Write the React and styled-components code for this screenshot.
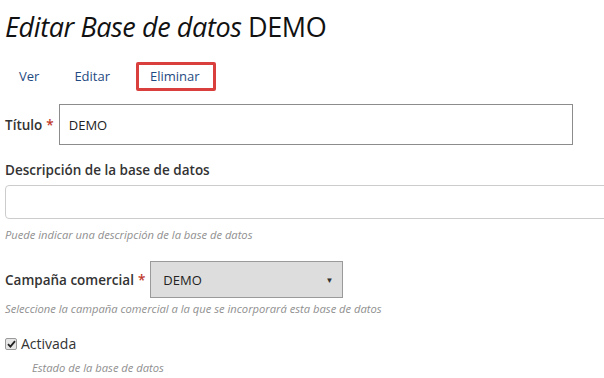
import React from "react";
import styled, { createGlobalStyle } from "styled-components";

const GlobalStyle = createGlobalStyle`
  body {
    margin: 0;
    background: #ffffff;
    font-family: "Open Sans", "Noto Sans", sans-serif;
    color: #333333;
    overflow: hidden;
  }
`;

const Page = styled.div`
  width: 604px;
  height: 378px;
  padding: 0 0 0 5px;
  box-sizing: border-box;
  overflow: hidden;
`;

const Title = styled.h1`
  margin: 0;
  padding-top: 11px;
  font-size: 27px;
  font-weight: 400;
  line-height: 32px;
  color: #111111;
  letter-spacing: -0.4px;
  em {
    font-style: italic;
  }
`;

const Tabs = styled.nav`
  display: flex;
  align-items: center;
  margin-top: 19px;
`;

const Tab = styled.a`
  display: block;
  box-sizing: border-box;
  height: 29px;
  line-height: 23px;
  padding: ${(p) => (p.active ? "0 13px 0 11px" : "0 11px")};
  font-size: 13px;
  color: #1f4a82;
  text-decoration: none;
  border: 3px solid ${(p) => (p.active ? "#d9403d" : "transparent")};
  border-radius: 2px;
  margin-left: ${(p) => p.offset || 0}px;
`;

const Row = styled.div`
  display: flex;
  align-items: center;
  margin-top: ${(p) => p.top || 0}px;
`;

const Label = styled.label`
  font-size: 13.5px;
  font-weight: 600;
  color: #333333;
  margin-right: 5px;
  white-space: nowrap;
`;

const Star = styled.span`
  color: #c0392b;
  margin-left: 4px;
`;

const TextInput = styled.div`
  box-sizing: border-box;
  width: ${(p) => p.width};
  height: ${(p) => p.height}px;
  border: 1px solid ${(p) => p.border};
  border-radius: ${(p) => p.radius || 0}px;
  background: #ffffff;
  font-size: 13px;
  color: #222222;
  display: flex;
  align-items: center;
  padding-left: 9px;
`;

const Block = styled.div`
  margin-top: ${(p) => p.top || 0}px;
`;

const BlockLabel = styled.div`
  font-size: 13.5px;
  font-weight: 600;
  color: #333333;
  margin-bottom: 6px;
`;

const Help = styled.div`
  font-size: 11.2px;
  font-style: italic;
  color: #8f8f8f;
  margin-top: ${(p) => p.top || 0}px;
  padding-left: ${(p) => p.indent || 0}px;
`;

const Select = styled.div`
  box-sizing: border-box;
  width: 193px;
  height: 37px;
  border: 1px solid #9a9a9a;
  background: #dddddd;
  display: flex;
  align-items: center;
  justify-content: space-between;
  padding: 0 9px 0 12px;
  font-size: 13px;
  color: #222222;
`;

const Caret = styled.span`
  font-size: 8px;
  color: #333333;
`;

const Check = styled.label`
  display: flex;
  align-items: center;
  gap: 4px;
  font-size: 14px;
  color: #333333;
`;

const Box = styled.span`
  box-sizing: border-box;
  width: 12px;
  height: 12px;
  border: 1px solid #9a9a9a;
  border-radius: 2px;
  background: #e6e6e6;
  display: flex;
  align-items: center;
  justify-content: center;
`;

export default function App() {
  return (
    <>
      <GlobalStyle />
      <Page>
        <Title>
          <em>Editar Base de datos</em> DEMO
        </Title>
        <Tabs>
          <Tab offset={0}>Ver</Tab>
          <Tab offset={7}>Editar</Tab>
          <Tab offset={12} active>
            Eliminar
          </Tab>
        </Tabs>
        <Row top={13}>
          <Label>
            Título<Star>*</Star>
          </Label>
          <TextInput width="514px" height={41} border="#8c8c8c">
            DEMO
          </TextInput>
        </Row>
        <Block top={16}>
          <BlockLabel>Descripción de la base de datos</BlockLabel>
          <TextInput width="640px" height={34} border="#cccccc" radius={4} />
          <Help top={8}>Puede indicar una descripción de la base de datos</Help>
        </Block>
        <Row top={19}>
          <Label>
            Campaña comercial<Star>*</Star>
          </Label>
          <Select>
            DEMO
            <Caret>▼</Caret>
          </Select>
        </Row>
        <Help top={3}>
          Seleccione la campaña comercial a la que se incorporará esta base de datos
        </Help>
        <Block top={18}>
          <Check>
            <Box>
              <svg width="9" height="8" viewBox="0 0 9 8">
                <path d="M1 4.2 L3.4 6.6 L8 1.2" fill="none" stroke="#222" strokeWidth="1.8" />
              </svg>
            </Box>
            Activada
          </Check>
          <Help top={7} indent={27}>
            Estado de la base de datos
          </Help>
        </Block>
      </Page>
    </>
  );
}
